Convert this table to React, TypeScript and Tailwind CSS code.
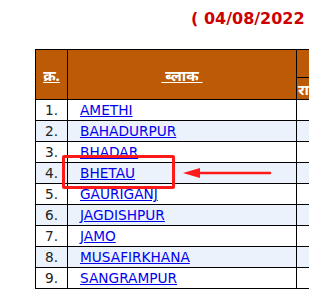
const blocks = [
  'AMETHI',
  'BAHADURPUR',
  'BHADAR',
  'BHETAU',
  'GAURIGANJ',
  'JAGDISHPUR',
  'JAMO',
  'MUSAFIRKHANA',
  'SANGRAMPUR',
]

export default function App() {
  return (
    <div className="relative w-[309px] h-[289px] overflow-hidden bg-white font-['DejaVu_Sans',sans-serif]">
      <div className="pl-[191px] pt-[9px] h-[49px] whitespace-nowrap text-[16px] font-bold text-[#cc0000] leading-[20px]">
        ( 04/08/2022
      </div>

      <table className="ml-[35px] w-[400px] table-fixed border-collapse border border-black text-[13.7px] leading-[16px]">
        <colgroup>
          <col className="w-[32px]" />
          <col className="w-[229px]" />
          <col />
        </colgroup>
        <thead>
          <tr className="bg-[#bd5a06] text-white font-bold">
            <th
              rowSpan={2}
              className="border border-black font-['Noto_Sans','DejaVu_Sans',sans-serif] text-[15px] underline"
            >
              क्र.
            </th>
            <th
              rowSpan={2}
              className="border border-black font-['Noto_Sans','DejaVu_Sans',sans-serif] text-[15px] underline whitespace-pre"
            >
              {' ब्लाक '}
            </th>
            <th className="h-[28px] border border-black"></th>
          </tr>
          <tr className="bg-[#bd5a06] text-white font-bold">
            <th className="h-[22px] p-0 border border-black text-left pl-[1px] font-['Noto_Sans','DejaVu_Sans',sans-serif] text-[15px] whitespace-nowrap">
              रा
            </th>
          </tr>
        </thead>
        <tbody>
          {blocks.map((name, i) => (
            <tr key={name} className={i % 2 === 1 ? 'bg-[#ebf2fc]' : 'bg-white'}>
              <td className="h-[21px] border border-black text-center text-[#222] p-0">{i + 1}.</td>
              <td className="border border-black pl-[12px] p-0">
                <a href="#" className="text-[#0000ee] underline">
                  {name}
                </a>
              </td>
              <td className="border border-black p-0"></td>
            </tr>
          ))}
        </tbody>
      </table>

      {/* annotation: highlight box */}
      <div className="absolute left-[62px] top-[155px] w-[113px] h-[34px] border-[3px] border-[#ff1a1a] rounded-[2px]" />

      {/* annotation: arrow */}
      <svg className="absolute left-[182px] top-[164px]" width="90" height="18" viewBox="0 0 90 18">
        <line x1="14" y1="9" x2="88" y2="9" stroke="#ff1a1a" strokeWidth="2.5" strokeLinecap="round" />
        <polygon points="1,9 18,4 18,14" fill="#ff1a1a" />
      </svg>
    </div>
  )
}
